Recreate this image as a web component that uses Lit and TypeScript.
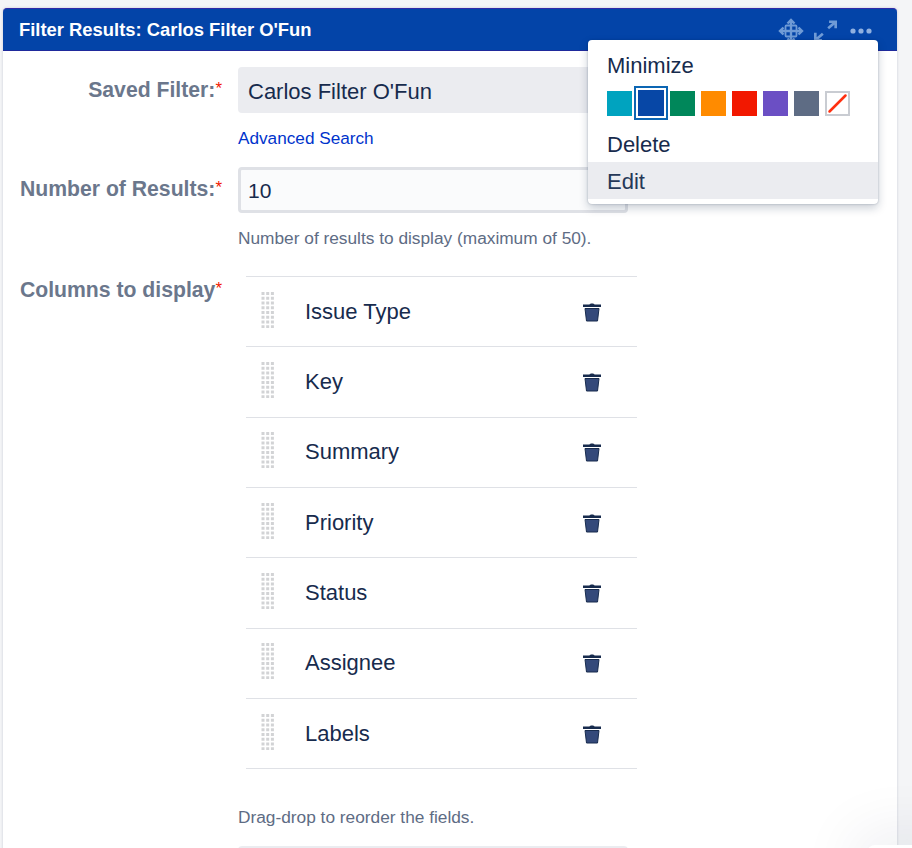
import { LitElement, html, css, svg } from 'lit';
import { customElement } from 'lit/decorators.js';

const COLUMNS = ['Issue Type', 'Key', 'Summary', 'Priority', 'Status', 'Assignee', 'Labels'];
const SWATCHES = ['#00a3bf', '#0747a6', '#00875a', '#ff8b00', '#f21800', '#6b4fc4', '#5e6c84'];

const dots = () => {
  const out = [];
  for (let row = 0; row < 8; row++) {
    for (let col = 0; col < 3; col++) {
      out.push(svg`<rect x=${col * 4.7 + 0.5} y=${row * 4.75} width="3" height="3" fill="#d2d3d5"></rect>`);
    }
  }
  return out;
};

@customElement('app-root')
export class AppRoot extends LitElement {
  static styles = css`
    :host {
      display: block;
      height: 848px;
      overflow: hidden;
      position: relative;
      background: #f4f5f7;
      font-family: "Liberation Sans", Arial, sans-serif;
      color: #172b4d;
    }
    .card {
      margin: 8px 15px 0 3px;
      background: #fff;
      border-radius: 4px 4px 0 0;
      box-shadow: 0 0 3px rgba(9, 30, 66, 0.18);
      height: 900px;
    }
    .head {
      height: 43px;
      box-sizing: border-box;
      background: #0344a8;
      border-top: 1px solid #2f2aa8;
      border-bottom: 1px solid #1f2a9c;
      border-radius: 4px 4px 0 0;
      display: flex;
      align-items: center;
      padding: 0 25px 0 16px;
    }
    .title {
      flex: 1;
      color: #fff;
      font-size: 18.4px;
      font-weight: 700;
      line-height: 42px;
    }
    .tools {
      display: flex;
      align-items: center;
      gap: 10px;
      padding-top: 2px;
    }
    .more {
      margin-left: 3px;
    }
    .form {
      display: grid;
      grid-template-columns: 219px 390px;
      column-gap: 16px;
      padding-top: 16px;
      align-items: start;
    }
    .label {
      text-align: right;
      font-size: 21.2px;
      font-weight: 700;
      color: #6b778c;
      line-height: 24px;
    }
    .label span {
      color: #f21800;
      font-size: 17px;
      vertical-align: 3px;
      font-weight: 400;
    }
    .label.saved {
      padding-top: 10px;
    }
    .label.count {
      padding-top: 9px;
    }
    .select {
      height: 46px;
      box-sizing: border-box;
      background: #ebecf0;
      border-radius: 4px;
      font-size: 22px;
      line-height: 46px;
      padding: 2px 0 0 10px;
    }
    .input {
      height: 46px;
      box-sizing: border-box;
      background: #fafbfc;
      border: 3px solid #dfe1e6;
      border-radius: 4px;
      font-size: 21px;
      line-height: 42px;
      padding-left: 7px;
    }
    .link {
      color: #0033cc;
      font-size: 17.2px;
      line-height: 20px;
      margin: 15px 0 19px;
    }
    .hint {
      color: #5e6c84;
      font-size: 17.3px;
      line-height: 20px;
      margin: 15px 0 28px;
    }
    .hint.last {
      margin: 38px 0 19px;
    }
    .columns-label {
      padding-top: 1px;
    }
    .list {
      margin-left: 8px;
      width: 391px;
      border-top: 1px solid #dfe1e6;
    }
    .row {
      height: 69.35px;
      display: flex;
      align-items: center;
      border-bottom: 1px solid #dfe1e6;
      font-size: 22px;
    }
    .grip {
      margin: 0 0 4px 15px;
      flex: none;
    }
    .name {
      flex: 1;
      margin-left: 29px;
    }
    .trash {
      margin-right: 35px;
      flex: none;
    }
    .next {
      height: 46px;
      background: #ebecf0;
      border-radius: 4px;
    }
    .menu {
      position: absolute;
      left: 588px;
      top: 40px;
      width: 290px;
      height: 164px;
      background: #fff;
      border-radius: 4px;
      box-shadow: 0 4px 10px rgba(9, 30, 66, 0.22), 0 0 2px rgba(9, 30, 66, 0.3);
      font-size: 22px;
      overflow: hidden;
    }
    .item {
      padding-left: 19px;
      line-height: 37px;
    }
    .item.first {
      margin-top: 7px;
    }
    .item.mid {
      line-height: 35px;
      padding-top: 1px;
    }
    .item.active {
      background: #ebecf0;
      color: #253858;
      line-height: 34px;
      padding-top: 3px;
    }
    .swatches {
      display: flex;
      align-items: center;
      height: 34px;
      margin: 2px 0 6px 19px;
      gap: 6px;
    }
    .swatch {
      width: 25px;
      height: 25px;
      box-sizing: border-box;
    }
    .swatch.on {
      width: 34px;
      height: 34px;
      margin: 0 -4px 0 -4px;
      border: 2px solid #0c66b3;
      padding: 2px;
      background-clip: content-box;
    }
    .swatch.none {
      border: 2px solid #c9ccd2;
      background: #fff;
    }
    .corner {
      position: absolute;
      left: 867px;
      top: 845px;
      width: 80px;
      height: 40px;
      background: #fff;
      border-radius: 8px;
      box-shadow: 0 0 60px 14px rgba(9, 30, 66, 0.07);
    }
  `;

  private renderIcons() {
    return html`<div class="tools">
      <svg width="26" height="26" viewBox="0 0 26 26" fill="none" stroke="#6f9bd6" stroke-width="2.4">
        <path d="M13 2v22M2 13h22M9.500 5.500 13 2l3.500 3.500M9.500 20.500 13 24l3.500-3.500M5.500 9.500 2 13l3.500 3.500M20.500 9.500 24 13l-3.500 3.500"></path>
        <rect x="7.500" y="7.500" width="11" height="11" rx="1" stroke-width="1.800"></rect>
      </svg>
      <svg width="23" height="22" viewBox="0 0 26 24" fill="none" stroke="#6f9bd6" stroke-width="3">
        <path d="M16 9l8-7M17 1.500h7.500V9M10 15l-8 7M1.500 14v8.500H9"></path>
      </svg>
      <svg class="more" width="22" height="6" viewBox="0 0 22 6" fill="#8fb0e0">
        <circle cx="3" cy="3" r="2.600"></circle><circle cx="11" cy="3" r="2.600"></circle><circle cx="19" cy="3" r="2.600"></circle>
      </svg>
    </div>`;
  }

  private renderRow(name: string) {
    return html`<div class="row">
      <svg class="grip" width="15" height="36" viewBox="0 0 15 36">${dots()}</svg>
      <div class="name">${name}</div>
      <svg class="trash" width="20" height="20" viewBox="0 0 20 20" fill="#172b4d">
        <path d="M7.500 2.500C8 1.300 12 1.300 12.500 2.500H19V5H1V2.500Z"></path>
        <path d="M3 6.500h14L15.500 19H4.500Z" fill="#34497a" stroke="#172b4d"></path>
      </svg>
    </div>`;
  }

  render() {
    return html`
      <div class="card">
        <div class="head">
          <div class="title">Filter Results: Carlos Filter O'Fun</div>
          ${this.renderIcons()}
        </div>
        <div class="form">
          <div class="label saved">Saved Filter:<span>*</span></div>
          <div>
            <div class="select">Carlos Filter O'Fun</div>
            <div class="link">Advanced Search</div>
          </div>
          <div class="label count">Number of Results:<span>*</span></div>
          <div>
            <div class="input">10</div>
            <div class="hint">Number of results to display (maximum of 50).</div>
          </div>
          <div class="label columns-label">Columns to display<span>*</span></div>
          <div>
            <div class="list">${COLUMNS.map((c) => this.renderRow(c))}</div>
            <div class="hint last">Drag-drop to reorder the fields.</div>
            <div class="next"></div>
          </div>
        </div>
      </div>
      <div class="corner"></div>
      <div class="menu">
        <div class="item first">Minimize</div>
        <div class="swatches">
          ${SWATCHES.map(
            (c, i) => html`<div class="swatch ${i === 1 ? 'on' : ''}" style="background-color:${c}"></div>`
          )}
          <div class="swatch none">
            <svg width="21" height="21" viewBox="0 0 21 21"><path d="M2.500 18.500 18.500 2.500" stroke="#ff3010" stroke-width="2.500" stroke-linecap="round"></path></svg>
          </div>
        </div>
        <div class="item mid">Delete</div>
        <div class="item active">Edit</div>
      </div>
    `;
  }
}
